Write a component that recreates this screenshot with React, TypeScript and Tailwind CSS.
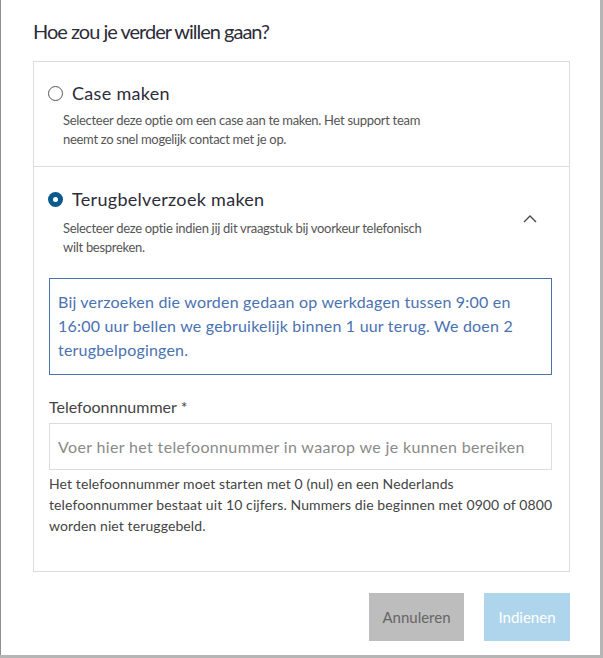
function Radio({ checked }: { checked?: boolean }) {
  if (checked) {
    return (
      <span className="w-[15px] h-[15px] rounded-full bg-[#0b5a8c] flex items-center justify-center shrink-0">
        <span className="w-[5px] h-[5px] rounded-full bg-white" />
      </span>
    );
  }
  return <span className="w-[15px] h-[15px] rounded-full border border-[#555] shrink-0" />;
}

export default function App() {
  return (
    <div className="w-[603px] h-[658px] bg-[#b5b5b5] flex font-[Lato,'Noto_Sans',sans-serif]">
      <div className="w-[600px] h-[655px] bg-white border-l border-[#8f8f8f] flex flex-col pl-8 pr-[30px]">
        <h1 className="mt-[18px] text-[20px] leading-[26px] tracking-[-1px] text-[#2c2c38]">Hoe zou je verder willen gaan?</h1>

        <div className="mt-[17px] h-[511px] border border-[#dcdcdc] flex flex-col">
          <div className="pl-[14px] pr-[17px] pt-[19px] pb-[17px] border-b border-[#dcdcdc]">
            <label className="flex items-center gap-[9px]">
              <Radio />
              <span className="text-[18px] leading-[24px] tracking-[0.3px] text-[#2c2c38]">Case maken</span>
            </label>
            <p className="ml-[15px] mt-[6px] w-[370px] text-[13px] leading-[19px] tracking-[-0.3px] text-[#555]">
              Selecteer deze optie om een case aan te maken. Het support team neemt zo snel mogelijk contact met je op.
            </p>
          </div>

          <div className="pl-[14px] pr-[17px] pt-[20px] flex flex-col">
            <label className="flex items-center gap-[9px]">
              <Radio checked />
              <span className="text-[18px] leading-[24px] tracking-[0.3px] text-[#2c2c38]">Terugbelverzoek maken</span>
            </label>
            <div className="flex items-start">
              <p className="ml-[15px] mt-[8px] w-[370px] text-[13px] leading-[19px] tracking-[-0.3px] text-[#555]">
                Selecteer deze optie indien jij dit vraagstuk bij voorkeur telefonisch wilt bespreken.
              </p>
              <svg className="ml-auto mr-[15px] mt-[3px]" width="14" height="9" viewBox="0 0 14 9" fill="none">
                <path d="M1 8 L7 2 L13 8" stroke="#4a4a4a" strokeWidth="1.4" />
              </svg>
            </div>

            <div className="ml-px mt-[21px] border border-[#4f6fa8] pl-[8px] pr-[8px] pt-[11px] pb-[12px] text-[16px] leading-[24px] tracking-[0.2px] text-[#4a72b2]">
              Bij verzoeken die worden gedaan op werkdagen tussen 9:00 en 16:00 uur bellen we gebruikelijk binnen 1 uur terug. We doen 2 terugbelpogingen.
            </div>

            <div className="ml-px mt-[21px] text-[16px] leading-[22px] text-[#444]">Telefoonnnummer *</div>
            <input
              className="ml-px mt-[5px] h-[47px] border border-[#dcdcdc] pl-[8px] text-[16px] tracking-[0.35px] text-[#333] outline-none placeholder:text-[#8a8a8a]"
              placeholder="Voer hier het telefoonnummer in waarop we je kunnen bereiken"
            />
            <p className="ml-px mt-[3px] w-[508px] text-[14px] leading-[21px] tracking-[0.1px] text-[#444]">
              Het telefoonnummer moet starten met 0 (nul) en een Nederlands telefoonnummer bestaat uit 10 cijfers. Nummers die beginnen met 0900 of 0800 worden niet teruggebeld.
            </p>
          </div>
        </div>

        <div className="mt-[21px] flex justify-end gap-5">
          <button className="w-[95px] h-[48px] bg-[#bdbdbd] text-[#666] text-[15px]">Annuleren</button>
          <button className="w-[86px] h-[48px] bg-[#aed5eb] text-white text-[15px]">Indienen</button>
        </div>
      </div>
    </div>
  );
}
